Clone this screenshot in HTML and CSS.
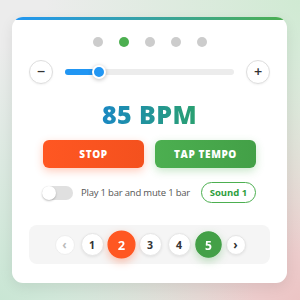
FILE: index.html
```html
<!DOCTYPE html>
<html>
<head>
<meta charset="utf-8">
<link rel="stylesheet" href="styles.css">
</head>
<body>
<div class="card">
  <div class="topbar"></div>
  <div class="dots">
    <span class="dot"></span>
    <span class="dot active"></span>
    <span class="dot"></span>
    <span class="dot"></span>
    <span class="dot"></span>
  </div>
  <div class="slider-row">
    <button class="round-btn">&minus;</button>
    <div class="track">
      <div class="fill" style="width:34px"></div>
      <div class="thumb" style="left:34px"></div>
    </div>
    <button class="round-btn">+</button>
  </div>
  <div class="bpm"><span class="bpm-text">85 BPM</span></div>
  <div class="actions">
    <button class="action stop">STOP</button>
    <button class="action tap">TAP TEMPO</button>
  </div>
  <div class="option-row">
    <div class="toggle"><span class="knob"></span></div>
    <span class="option-label">Play 1 bar and mute 1 bar</span>
    <button class="pill">Sound 1</button>
  </div>
  <div class="pager">
    <button class="page arrow disabled">&lsaquo;</button>
    <button class="page">1</button>
    <button class="page current">2</button>
    <button class="page">3</button>
    <button class="page">4</button>
    <button class="page playing">5</button>
    <button class="page arrow">&rsaquo;</button>
  </div>
</div>
</body>
</html>
```

FILE: styles.css
```css
* { box-sizing: border-box; }
html, body { margin: 0; padding: 0; }
body {
  width: 300px;
  height: 300px;
  overflow: hidden;
  font-family: "Open Sans", "Liberation Sans", sans-serif;
  background:
    radial-gradient(circle at 100% 0%, #d0ead3 0%, rgba(208,234,211,0) 60%),
    radial-gradient(circle at 0% 100%, #c9e6d4 0%, rgba(201,230,212,0) 60%),
    radial-gradient(circle at 100% 100%, #ecc4c4 0%, rgba(236,196,196,0) 60%),
    #ececec;
  padding-top: 17px;
}
.card {
  margin-left: 12px;
  width: 275px;
  height: 266px;
  background: #fff;
  border-radius: 11px;
  overflow: hidden;
  box-shadow: 0 4px 14px rgba(0,0,0,0.08);
  display: flex;
  flex-direction: column;
  padding: 0 17px;
}
.topbar {
  height: 3px;
  margin: 0 -17px;
  background: linear-gradient(90deg, #2196f3, #4caf50);
}
.dots {
  display: flex;
  justify-content: center;
  gap: 16px;
  margin-top: 17px;
}
.dot {
  width: 10px;
  height: 10px;
  border-radius: 50%;
  background: #cccccc;
}
.dot.active { background: #4caf50; }
.slider-row {
  display: flex;
  align-items: center;
  margin-top: 13px;
  gap: 12px;
}
.round-btn {
  width: 24px;
  height: 24px;
  border-radius: 50%;
  border: 1px solid #dedede;
  background: #fff;
  padding: 0;
  font-family: "DejaVu Sans", sans-serif;
  font-weight: bold;
  font-size: 11px;
  line-height: 22px;
  color: #333;
  box-shadow: 0 1px 2px rgba(0,0,0,0.05);
}
.track {
  flex: 1;
  height: 6px;
  border-radius: 3px;
  background: #ececec;
  position: relative;
}
.fill {
  height: 100%;
  border-radius: 3px;
  background: #2196f3;
}
.thumb {
  position: absolute;
  top: 50%;
  width: 14px;
  height: 14px;
  margin: -7px 0 0 -7px;
  border-radius: 50%;
  background: #2196f3;
  border: 2px solid #fff;
  box-shadow: 0 1px 4px rgba(0,0,0,0.25);
}
.bpm {
  text-align: center;
  margin-top: 15px;
  line-height: 30px;
  height: 30px;
}
.bpm-text {
  font-size: 25px;
  font-weight: 800;
  letter-spacing: 0.4px;
  background: linear-gradient(90deg, #1a88c2, #2aa070);
  -webkit-background-clip: text;
  background-clip: text;
  color: transparent;
}
.actions {
  display: flex;
  gap: 11px;
  padding: 0 14px;
  margin-top: 11px;
}
.action {
  flex: 1;
  height: 28px;
  border: 0;
  border-radius: 6px;
  color: #fff;
  font-family: "Open Sans", sans-serif;
  font-weight: 800;
  font-size: 10px;
  letter-spacing: 0.6px;
  padding: 0;
}
.stop {
  background: linear-gradient(90deg, #ff5722, #f4511e);
  box-shadow: 0 3px 8px rgba(255,87,34,0.3);
}
.tap {
  background: linear-gradient(90deg, #4caf50, #43a047);
  box-shadow: 0 3px 8px rgba(76,175,80,0.3);
}
.option-row {
  display: flex;
  align-items: center;
  padding: 0 14px 0 13px;
  margin-top: 14px;
  height: 21px;
}
.toggle {
  width: 31px;
  height: 14px;
  border-radius: 7px;
  background: #e0e0e0;
  position: relative;
  flex: none;
}
.knob {
  position: absolute;
  left: 0;
  top: 0;
  width: 14px;
  height: 14px;
  border-radius: 50%;
  background: #fff;
  box-shadow: 0 1px 2px rgba(0,0,0,0.25);
}
.option-label {
  margin-left: 8px;
  font-size: 9.5px;
  letter-spacing: -0.2px;
  white-space: nowrap;
  color: #555;
  flex: 1;
}
.pill {
  flex: none;
  width: 55px;
  height: 21px;
  border: 1.5px solid #4caf50;
  border-radius: 11px;
  background: #fff;
  color: #2e9e3e;
  font-family: "Open Sans", sans-serif;
  font-weight: 700;
  font-size: 9.5px;
  padding: 0;
}
.pager {
  margin-top: 22px;
  height: 39px;
  border-radius: 8px;
  background: #f5f5f5;
  display: flex;
  align-items: center;
  justify-content: center;
  gap: 6px;
  padding-left: 1px;
}
.page {
  width: 23px;
  height: 23px;
  border-radius: 50%;
  border: 1px solid #e6e6e6;
  background: #fff;
  padding: 0;
  font-family: "Open Sans", sans-serif;
  font-weight: 700;
  font-size: 10.5px;
  color: #333;
  box-shadow: 0 1px 3px rgba(0,0,0,0.08);
}
.page.arrow {
  width: 20px;
  height: 20px;
  font-size: 12px;
  line-height: 16px;
}
.page.disabled { color: #bbb; box-shadow: none; border-color: #eee; }
.page.current {
  background: #ff5722;
  border-color: #ff5722;
  color: #fff;
  transform: scale(1.22);
  box-shadow: 0 3px 7px rgba(255,87,34,0.35);
}
.page.playing {
  background: #43a047;
  border-color: #43a047;
  color: #fff;
  transform: scale(1.15);
  box-shadow: 0 3px 7px rgba(76,175,80,0.35);
}
```
